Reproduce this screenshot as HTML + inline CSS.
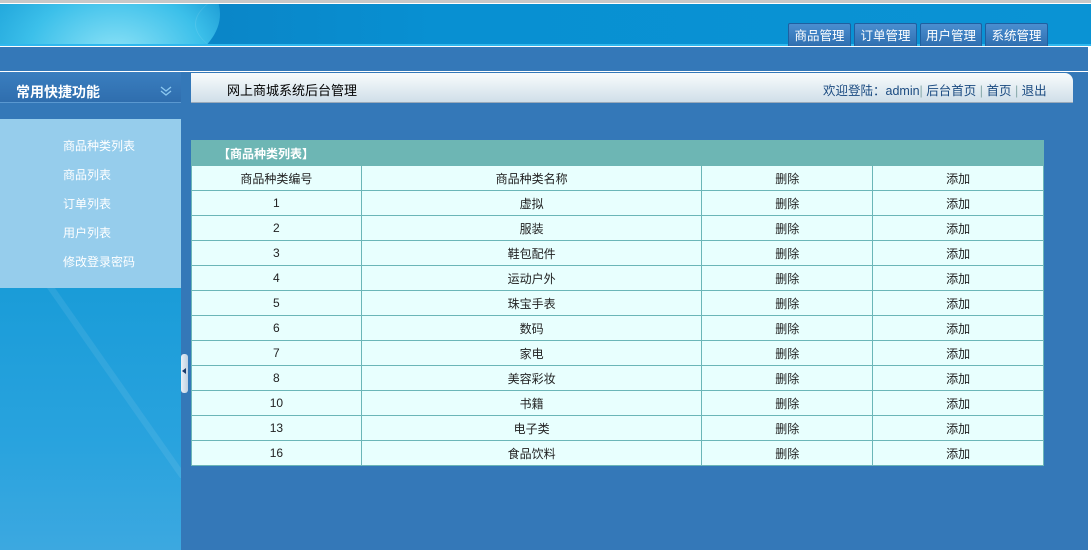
<!DOCTYPE html>
<html><head><meta charset="utf-8"><style>
*{margin:0;padding:0;box-sizing:border-box}
body{width:1091px;height:550px;overflow:hidden;background:#fff;font-family:"Liberation Sans","Noto Sans CJK SC",sans-serif;font-size:12px;position:relative}
.abs{position:absolute}
#top{left:0;top:0;width:1091px;height:3px;background:#c8c8c8}
#hdr{left:0;top:4px;width:1091px;height:42px;background:linear-gradient(90deg,#1aa0d8 0%,#0a86c8 20%,#0890d2 40%,#0a93d4 100%);overflow:hidden}
#hdr:before{content:"";position:absolute;left:-40px;top:-60px;width:260px;height:140px;border-radius:50%;background:radial-gradient(ellipse at 60% 80%,#8fe3f7 0%,#3cc0ea 40%,rgba(20,150,210,0) 70%)}
#hdr:after{content:"";position:absolute;left:195px;top:-40px;width:420px;height:120px;border-radius:50%;border-left:1px solid rgba(255,255,255,.1)}
#hline{left:0;top:44px;width:1091px;height:2px;background:#30b8ee}
#band{left:0;top:46px;width:1088px;height:504px;background:#3478b8;border-top:1px solid #fff}
#band2{left:0;top:71px;width:1088px;height:1px;background:#fff}
.tab{top:23px;height:23px;background:linear-gradient(#4a8ed0,#2f6fb0);border:1px solid #1f5fa0;border-bottom:none;color:#fff;font-size:12.5px;line-height:24px;text-align:center;border-radius:2px 2px 0 0}
#side{left:0;top:72px;width:181px;height:478px;background:#3478b8}
#stitle{left:0;top:72px;width:181px;height:31px;background:linear-gradient(#3a7ebf,#2f6eae);border-bottom:1px solid #5a98d0;color:#fff;font-weight:bold;font-size:14px;line-height:40px;padding-left:16px}
#chev{left:160px;top:86px}
#menu{left:0;top:119px;width:181px;height:169px;background:#96cdec}
.mi{left:63px;color:#fff;font-size:12px}
#sbot{left:0;top:288px;width:181px;height:262px;background:linear-gradient(#1a9cd8,#29a3de 60%,#3ca8e0);overflow:hidden}
#sbot:before{content:"";position:absolute;left:40px;top:-10px;width:300px;height:200px;border-left:8px solid rgba(255,255,255,.08);transform:skewX(35deg);transform-origin:top left}
#handle{left:181px;top:354px;width:7px;height:39px;background:linear-gradient(90deg,#e8f0f8,#c0d0e0);border-radius:3px}
#handle:after{content:"";position:absolute;left:1px;top:14px;border:3px solid transparent;border-right:4px solid #1a3a6a;border-left:none}
#bar{left:191px;top:73px;width:882px;height:30px;background:linear-gradient(#f8fbfc,#d0dfe9);border-radius:0 8px 0 0;border-bottom:1px solid #9ab}
#bart{left:227px;top:80px;font-size:13px;color:#000}
#barr{left:823px;top:80px;font-size:12.5px;color:#1a4a80}
#barr span{color:#8aa}
table{position:absolute;left:191px;top:140px;width:853px;border-collapse:collapse;background:#e8fffe}
td{border:1px solid #6bb6b8;height:25px;text-align:center;color:#222;font-size:12px}
tr.t td{background:#6db6b4;color:#fff;font-weight:bold;text-align:left;padding-left:26px;border-color:#6db6b4}
</style></head><body>
<div class="abs" id="top"></div>
<div class="abs" id="hdr"></div>
<div class="abs" id="hline"></div>
<div class="abs" id="band"></div>
<div class="abs" id="band2"></div>
<div class="abs tab" style="left:788px;width:63px">商品管理</div>
<div class="abs tab" style="left:854px;width:63px">订单管理</div>
<div class="abs tab" style="left:920px;width:62px">用户管理</div>
<div class="abs tab" style="left:985px;width:63px">系统管理</div>
<div class="abs" id="side"></div>
<div class="abs" id="stitle">常用快捷功能</div>
<svg class="abs" id="chev" width="12" height="10" viewBox="0 0 12 10"><path d="M1 1L6 5L11 1M1 5L6 9L11 5" fill="none" stroke="#8cc8f0" stroke-width="1.3"/></svg>
<div class="abs" id="menu"></div>
<div class="abs mi" style="top:137px">商品种类列表</div>
<div class="abs mi" style="top:166px">商品列表</div>
<div class="abs mi" style="top:195px">订单列表</div>
<div class="abs mi" style="top:224px">用户列表</div>
<div class="abs mi" style="top:253px">修改登录密码</div>
<div class="abs" id="sbot"></div>
<div class="abs" id="handle"></div>
<div class="abs" id="bar"></div>
<div class="abs" id="bart">网上商城系统后台管理</div>
<div class="abs" id="barr">欢迎登陆：admin<span>|</span> 后台首页 <span>|</span> 首页 <span>|</span> 退出</div>
<table>
<colgroup><col style="width:170px"><col style="width:341px"><col style="width:171px"><col style="width:171px"></colgroup>
<tr class="t"><td colspan="4">【商品种类列表】</td></tr>
<tr><td>商品种类编号</td><td>商品种类名称</td><td>删除</td><td>添加</td></tr>
<tr><td>1</td><td>虚拟</td><td>删除</td><td>添加</td></tr>
<tr><td>2</td><td>服装</td><td>删除</td><td>添加</td></tr>
<tr><td>3</td><td>鞋包配件</td><td>删除</td><td>添加</td></tr>
<tr><td>4</td><td>运动户外</td><td>删除</td><td>添加</td></tr>
<tr><td>5</td><td>珠宝手表</td><td>删除</td><td>添加</td></tr>
<tr><td>6</td><td>数码</td><td>删除</td><td>添加</td></tr>
<tr><td>7</td><td>家电</td><td>删除</td><td>添加</td></tr>
<tr><td>8</td><td>美容彩妆</td><td>删除</td><td>添加</td></tr>
<tr><td>10</td><td>书籍</td><td>删除</td><td>添加</td></tr>
<tr><td>13</td><td>电子类</td><td>删除</td><td>添加</td></tr>
<tr><td>16</td><td>食品饮料</td><td>删除</td><td>添加</td></tr>
</table>
</body></html>
